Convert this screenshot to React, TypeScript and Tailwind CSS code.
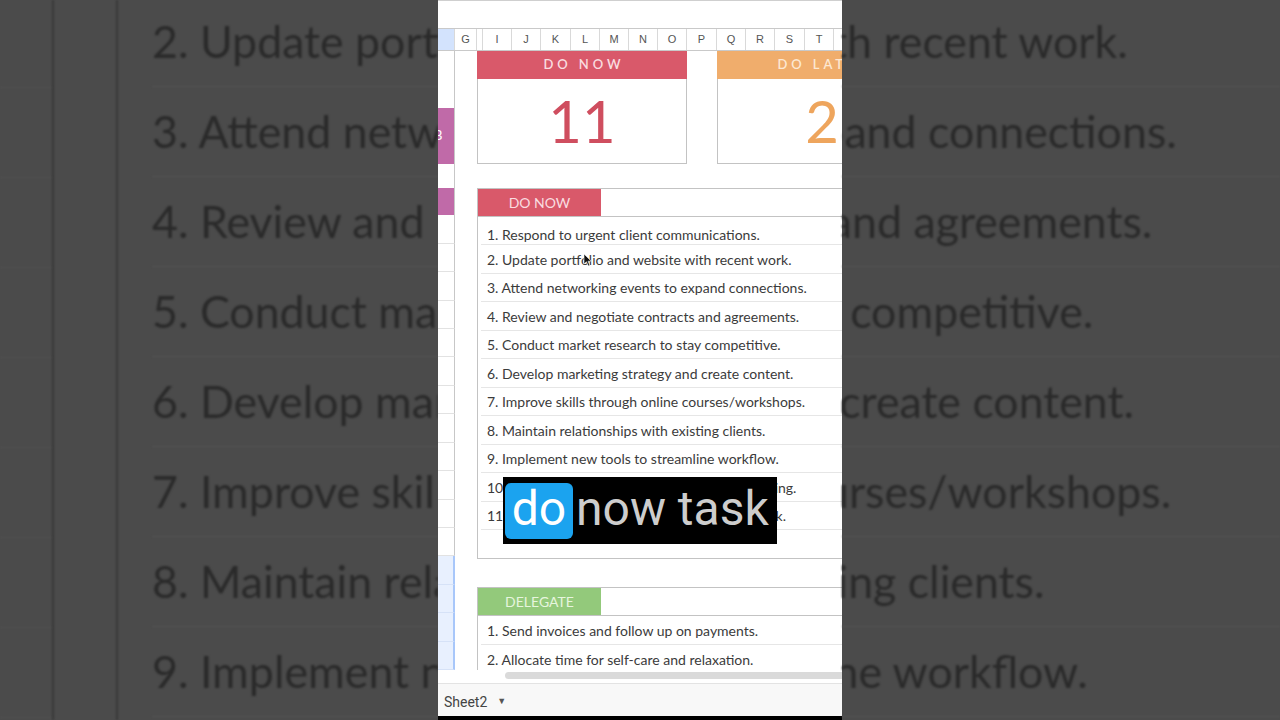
import React from "react";

// Blurred, zoomed copy of the list that fills the sides of the video frame.
const bgRows = [
  "2. Update portfolio and website with recent work.",
  "3. Attend networking events to expand connections.",
  "4. Review and negotiate contracts and agreements.",
  "5. Conduct market research to stay competitive.",
  "6. Develop marketing strategy and create content.",
  "7. Improve skills through online courses/workshops.",
  "8. Maintain relationships with existing clients.",
  "9. Implement new tools to streamline workflow.",
];

const doNow = [
  "1. Respond to urgent client communications.",
  "2. Update portfolio and website with recent work.",
  "3. Attend networking events to expand connections.",
  "4. Review and negotiate contracts and agreements.",
  "5. Conduct market research to stay competitive.",
  "6. Develop marketing strategy and create content.",
  "7. Improve skills through online courses/workshops.",
  "8. Maintain relationships with existing clients.",
  "9. Implement new tools to streamline workflow.",
  "10. Track finances and update quarterly budgeting.",
  "11. Seek testimonials and gather client feedback.",
];

const delegate = [
  "1. Send invoices and follow up on payments.",
  "2. Allocate time for self-care and relaxation.",
];

const cols = [
  { l: "", c: "w-[17px] bg-[#d3e3fd]" },
  { l: "G", c: "w-[22px]" },
  { l: "", c: "w-[6px]" },
  { l: "I", c: "w-[29px]" },
  { l: "J", c: "w-[29px]" },
  { l: "K", c: "w-[30px]" },
  { l: "L", c: "w-[29px]" },
  { l: "M", c: "w-[29px]" },
  { l: "N", c: "w-[29px]" },
  { l: "O", c: "w-[29px]" },
  { l: "P", c: "w-[30px]" },
  { l: "Q", c: "w-[29px]" },
  { l: "R", c: "w-[29px]" },
  { l: "S", c: "w-[30px]" },
  { l: "T", c: "w-[29px]" },
  { l: "U", c: "w-[29px]" },
];

const sheetFont = { fontFamily: "Lato, 'Open Sans', sans-serif" };

function BgRow({ text, shift }: { text: string; shift?: boolean }) {
  return (
    <div
      className={
        "flex h-[90px] items-center whitespace-nowrap border-b border-[#545454] text-[44.7px] text-[#2a2a2a] " +
        (shift ? "-ml-[686px]" : "")
      }
    >
      {text}
    </div>
  );
}

function StatCard({
  title,
  value,
  head,
  headText,
  valueText,
}: {
  title: string;
  value: string;
  head: string;
  headText: string;
  valueText: string;
}) {
  return (
    <div className="flex w-[210px] shrink-0 flex-col">
      <div className={"flex h-[28px] items-center justify-center pl-[4px] text-[13px] font-semibold tracking-[0.3em] " + head + " " + headText}>
        {title}
      </div>
      <div className="flex h-[85px] items-center justify-center border-x border-b border-[#c3c3c3] bg-white">
        <span className={"text-[58px] font-normal leading-none " + valueText}>{value}</span>
      </div>
    </div>
  );
}

function TaskBox({
  title,
  tab,
  tabText,
  items,
  tail,
}: {
  title: string;
  tab: string;
  tabText: string;
  items: string[];
  tail: boolean;
}) {
  return (
    <div className={"flex flex-col border-l border-t border-[#c3c3c3] " + (tail ? "border-b" : "")}>
      <div className="flex h-[28px] border-b border-[#c3c3c3]">
        <div className={"flex w-[123px] items-center justify-center text-[14px] " + tab + " " + tabText}>
          {title}
        </div>
      </div>
      {items.map((t, i) => (
        <div
          key={t}
          className={
            "ml-[3px] flex items-center whitespace-nowrap border-b border-[#e6e6e6] pl-[6px] text-[14px] text-[#3b3b3b] " +
            (i === 0 && tail ? "h-[28px] pt-[8px]" : i % 2 ? "h-[28.5px] pt-[2px]" : "h-[28.5px] pt-[1px]")
          }
        >
          {t}
        </div>
      ))}
      {tail && <div className="h-[28px]" />}
    </div>
  );
}

export default function App() {
  return (
    <div className="flex h-[720px] w-[1280px] overflow-hidden bg-[#4b4b4b]" style={sheetFont}>
      {/* left blurred side */}
      <div className="flex h-[720px] w-[438px] shrink-0 overflow-hidden blur-[1.2px]">
        <div className="w-[54px] shrink-0 border-r-2 border-[#383838]">
          {bgRows.map((t) => (
            <div key={t} className="h-[90px] border-b border-[#525252] first:-mt-[2px]" />
          ))}
        </div>
        <div className="w-[64px] shrink-0 border-r-2 border-[#383838]" />
        <div className="min-w-0 flex-1 overflow-hidden pl-[34px]">
          <div className="-mt-[3px]">
            {bgRows.map((t) => (
              <BgRow key={t} text={t} />
            ))}
          </div>
        </div>
      </div>

      {/* spreadsheet frame */}
      <div className="relative flex h-[720px] w-[404px] shrink-0 flex-col overflow-hidden bg-white">
        <div className="h-[28px] shrink-0 border-t border-[#cfcfcf]" />
        <div className="flex h-[23px] shrink-0 border-y border-[#c9c9c9]" style={{ fontFamily: "'Liberation Sans', Arial, sans-serif" }}>
          {cols.map((c, i) => (
            <div
              key={i}
              className={"flex shrink-0 items-center justify-center border-r border-[#d9d9d9] text-[11px] text-[#555] " + c.c}
            >
              {c.l}
            </div>
          ))}
        </div>

        <div className="flex h-[619px] shrink-0 overflow-hidden">
          {/* partial column at the left */}
          <div className="flex w-[17px] shrink-0 flex-col">
            <div className="h-[57px] border-r border-[#c7c7c7]" />
            <div className="flex h-[56px] items-center overflow-hidden border-r border-[#c7c7c7] bg-[#c06aa8]">
              <span className="-ml-[4px] text-[13px] text-white">B</span>
            </div>
            <div className="h-[24px] border-r border-[#c7c7c7]" />
            <div className="h-[28px] border-r border-[#c7c7c7] bg-[#c06aa8]" />
            {Array.from({ length: 12 }).map((_, i) => (
              <div key={i} className="h-[28.5px] border-b border-r border-[#e2e2e2] border-r-[#c7c7c7]" />
            ))}
            {Array.from({ length: 4 }).map((_, i) => (
              <div key={i} className="h-[28.5px] border-b border-r-2 border-[#d6e2f7] border-r-[#a8c7fa] bg-[#e8f0fe]" />
            ))}
          </div>

          {/* sheet content */}
          <div className="flex min-w-0 flex-1 flex-col pl-[22px]">
            <div className="flex h-[113px] shrink-0 gap-[30px]">
              <StatCard title="DO NOW" value="11" head="bg-[#d9596a]" headText="text-[#f9dde0]" valueText="text-[#cf4e5f]" />
              <StatCard title="DO LATER" value="2" head="bg-[#f0ad6c]" headText="text-[#fde8d2]" valueText="text-[#eea55d]" />
            </div>
            <div className="h-[24px] shrink-0" />
            <TaskBox title="DO NOW" tab="bg-[#d9596a]" tabText="text-[#f9dde0]" items={doNow} tail />
            <div className="h-[28px] shrink-0" />
            <TaskBox title="DELEGATE" tab="bg-[#93c97b]" tabText="text-[#e6f5de]" items={delegate} tail={false} />
          </div>
        </div>

        {/* horizontal scrollbar */}
        <div className="flex h-[13px] shrink-0 items-start pl-[67px] pt-[2px]">
          <div className="h-[7px] flex-1 rounded-l-full bg-[#dadada]" />
        </div>

        {/* sheet tabs */}
        <div
          className="flex h-[33px] shrink-0 items-center gap-[10px] border-t border-[#e3e3e3] bg-[#f8f8f8] pl-[6px] pt-[4px] text-[14px] text-[#444]"
          style={{ fontFamily: "Roboto, 'Liberation Sans', sans-serif" }}
        >
          <span>Sheet2</span>
          <span className="text-[9px] text-[#555]">▼</span>
        </div>
        <div className="h-[4px] shrink-0 bg-black" />

        {/* mouse pointer */}
        <svg className="absolute left-[145px] top-[253px]" width="9" height="14" viewBox="0 0 9 14">
          <path d="M1 1 L1 11 L3.5 8.8 L5.3 13 L6.8 12.3 L5 8.2 L8.3 8.2 Z" fill="#111" stroke="#fff" strokeWidth="0.6" />
        </svg>

        {/* video caption */}
        <div
          className="absolute left-[65px] top-[477px] flex h-[67px] w-[274px] items-center bg-black pl-[2px]"
          style={{ fontFamily: "Roboto, 'Liberation Sans', sans-serif" }}
        >
          <div className="flex h-[56px] w-[68px] items-center justify-center rounded-[6px] bg-[#1ba3ef] pb-[4px] text-[48px] leading-none text-white">
            do
          </div>
          <span className="ml-[3px] pb-[4px] text-[48px] leading-none text-[#cdcdcd]">now task</span>
        </div>
      </div>

      {/* right blurred side */}
      <div className="h-[720px] w-[438px] shrink-0 overflow-hidden blur-[1.2px]">
        <div className="-mt-[3px]">
          {bgRows.map((t) => (
            <BgRow key={t} text={t} shift />
          ))}
        </div>
      </div>
    </div>
  );
}
